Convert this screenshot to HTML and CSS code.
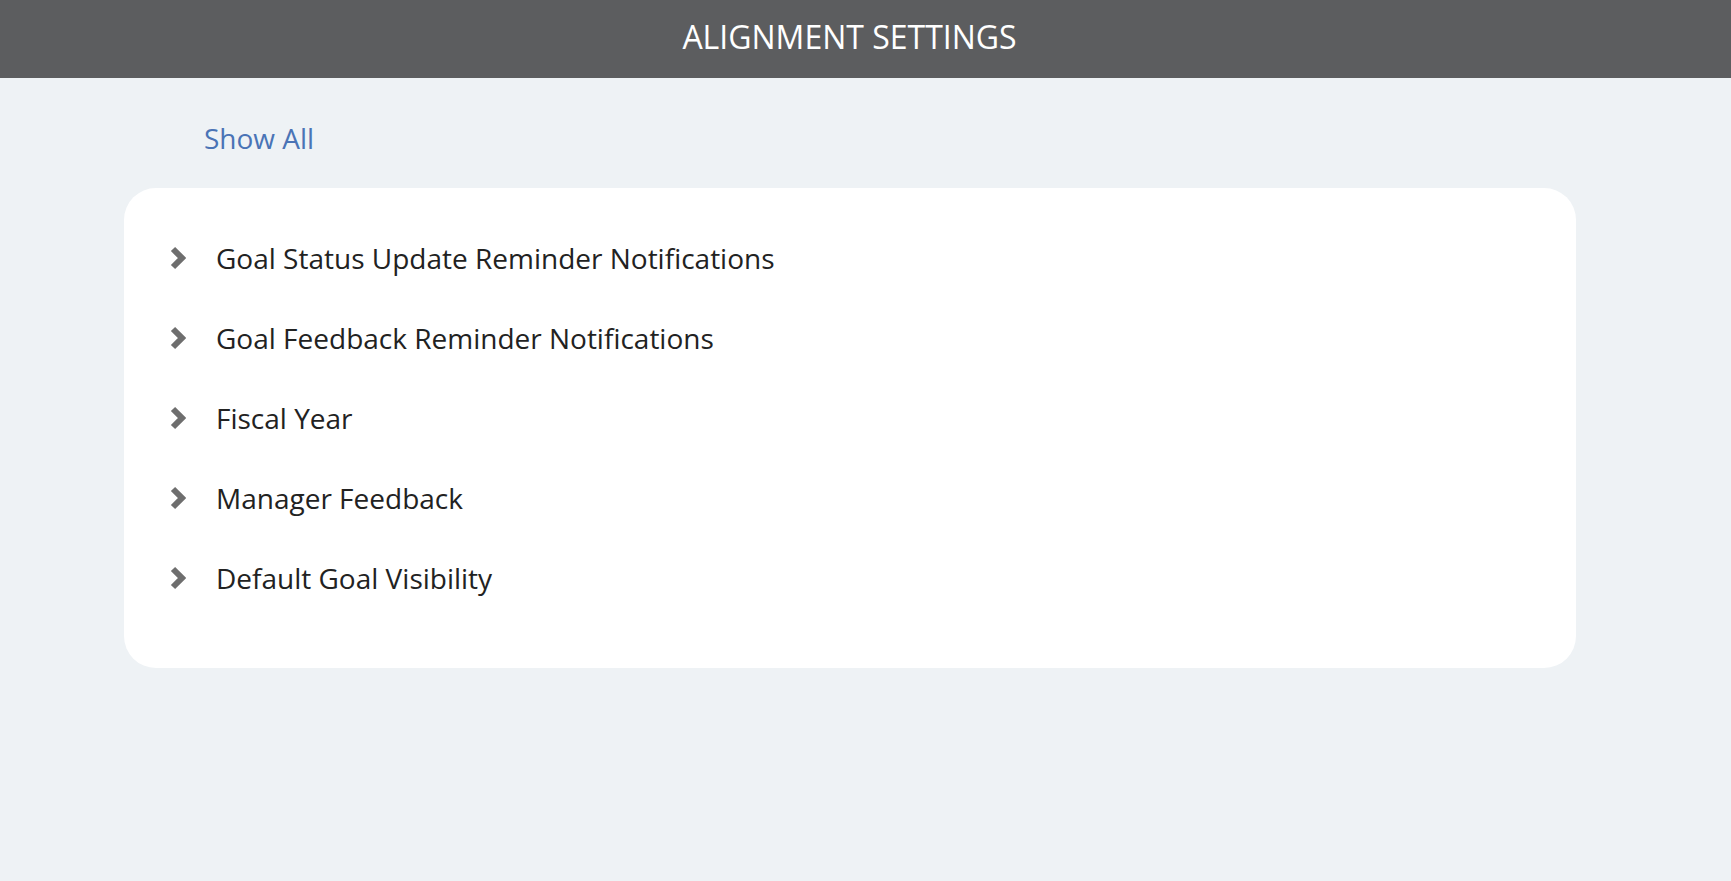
FILE: index.html
```html
<!DOCTYPE html>
<html lang="en">
<head>
    <meta charset="UTF-8">
    <meta name="viewport" content="width=device-width, initial-scale=1.0">
    <title>Alignment Settings</title>
    <link rel="stylesheet" href="styles.css">
</head>
<body>
    <header class="topbar">
        <h1 class="topbar-title">ALIGNMENT SETTINGS</h1>
    </header>

    <main class="content">
        <a class="show-all" href="#">Show All</a>

        <div class="settings-card">
            <div class="setting-row">
                <svg class="chevron" viewBox="0 0 16 24"><path d="M3 3 L12 12 L3 21" /></svg>
                <span class="setting-label">Goal Status Update Reminder Notifications</span>
            </div>
            <div class="setting-row">
                <svg class="chevron" viewBox="0 0 16 24"><path d="M3 3 L12 12 L3 21" /></svg>
                <span class="setting-label">Goal Feedback Reminder Notifications</span>
            </div>
            <div class="setting-row">
                <svg class="chevron" viewBox="0 0 16 24"><path d="M3 3 L12 12 L3 21" /></svg>
                <span class="setting-label">Fiscal Year</span>
            </div>
            <div class="setting-row">
                <svg class="chevron" viewBox="0 0 16 24"><path d="M3 3 L12 12 L3 21" /></svg>
                <span class="setting-label">Manager Feedback</span>
            </div>
            <div class="setting-row">
                <svg class="chevron" viewBox="0 0 16 24"><path d="M3 3 L12 12 L3 21" /></svg>
                <span class="setting-label">Default Goal Visibility</span>
            </div>
        </div>
    </main>
</body>
</html>
```

FILE: styles.css
```css
* {
    margin: 0;
    padding: 0;
    box-sizing: border-box;
}

body {
    font-family: 'Open Sans', 'Liberation Sans', sans-serif;
    background: #eef2f5;
    color: #222;
    min-height: 100vh;
}

.topbar {
    height: 78px;
    background: #5c5d5f;
    display: flex;
    align-items: center;
    justify-content: center;
    padding-right: 32px;
}

.topbar-title {
    color: #fff;
    font-size: 32px;
    font-weight: 400;
    padding-bottom: 6px;
}

.content {
    padding: 0 155px 0 124px;
}

.show-all {
    display: inline-block;
    margin: 40px 0 0 80px;
    color: #4a74b6;
    font-size: 28px;
    text-decoration: none;
    line-height: 40px;
}

.settings-card {
    margin-top: 30px;
    background: #fff;
    border-radius: 32px;
    padding: 30px 0 50px 46px;
}

.setting-row {
    display: flex;
    align-items: center;
    height: 80px;
}

.chevron {
    width: 16px;
    height: 24px;
    margin-right: 30px;
    fill: none;
    stroke: #6e6e6e;
    stroke-width: 6;
    stroke-linecap: butt;
    stroke-linejoin: miter;
}

.setting-label {
    font-size: 28px;
    color: #222;
}
```
